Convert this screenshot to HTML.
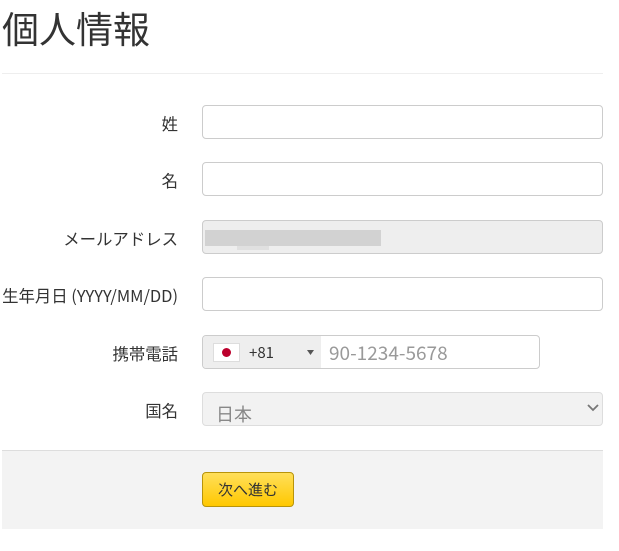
<!DOCTYPE html>
<html><head><meta charset="utf-8"><style>
body{margin:0;background:#fff;font-family:"Noto Sans CJK JP",sans-serif;color:#333;width:619px;height:551px;position:relative;overflow:hidden}
.a{position:absolute}
h1{position:absolute;left:2px;top:2px;margin:0;font-size:37px;font-weight:normal;color:#333;line-height:50px;font-family:"Noto Sans CJK JP",sans-serif}
.hr{left:2px;top:73px;width:601px;height:1px;background:#eee}
.lbl{right:441px;font-size:16.4px;text-align:right;line-height:34px;white-space:nowrap;margin-top:1px}
.in{left:202px;width:399px;height:32px;border:1px solid #ccc;border-radius:4px;background:#fff}
.dis{background:#eee}
</style></head><body>
<h1>個人情報</h1>
<div class="a hr"></div>
<div class="a lbl" style="top:105px">姓</div>
<div class="a in" style="top:105px"></div>
<div class="a lbl" style="top:162px">名</div>
<div class="a in" style="top:162px"></div>
<div class="a lbl" style="top:220px">メールアドレス</div>
<div class="a in dis" style="top:220px"></div>
<div class="a" style="left:205px;top:230px;width:176px;height:16px;background:#d2d2d2"></div>
<div class="a" style="left:237px;top:246px;width:32px;height:4px;background:#e0e0e0"></div>
<div class="a lbl" style="top:277px">生年月日 (YYYY/MM/DD)</div>
<div class="a in" style="top:277px"></div>
<div class="a lbl" style="top:335px">携帯電話</div>
<div class="a in" style="top:335px;width:336px;overflow:hidden">
 <div class="a" style="left:0;top:0;width:118px;height:32px;background:#eee"></div>
 <div class="a" style="left:10px;top:7px;width:25px;height:17px;background:#fff;border:1px solid #ddd"><div class="a" style="left:8px;top:4px;width:9px;height:9px;border-radius:50%;background:#bc002d"></div></div>
 <div class="a" style="left:46px;top:1px;line-height:32px;font-size:15px;color:#333">+81</div>
 <svg class="a" style="left:104px;top:14px" width="7" height="5"><path d="M0 0H7L3.5 5Z" fill="#555"/></svg>
 <div class="a" style="left:126px;top:0;line-height:34px;font-size:19px;color:#999">90-1234-5678</div>
</div>
<div class="a lbl" style="top:392px">国名</div>
<div class="a in" style="top:392px;background:#f2f2f2;border-color:#ddd;overflow:hidden">
 <div class="a" style="left:13px;top:6px;font-size:18px;color:#888;line-height:30px">日本</div>
 <svg class="a" style="left:384px;top:11px" width="12" height="8"><path d="M1 1L6 6L11 1" stroke="#777" stroke-width="1.8" fill="none"/></svg>
</div>
<div class="a" style="left:2px;top:450px;width:601px;height:78px;background:#f3f3f3;border-top:1px solid #ddd"></div>
<div class="a" style="left:202px;top:472px;width:90px;height:33px;border:1px solid #b8940a;border-radius:4px;background:linear-gradient(#ffdf5a,#ffc800);font-size:15px;color:#333;text-align:center;line-height:33px">次へ進む</div>
</body></html>
